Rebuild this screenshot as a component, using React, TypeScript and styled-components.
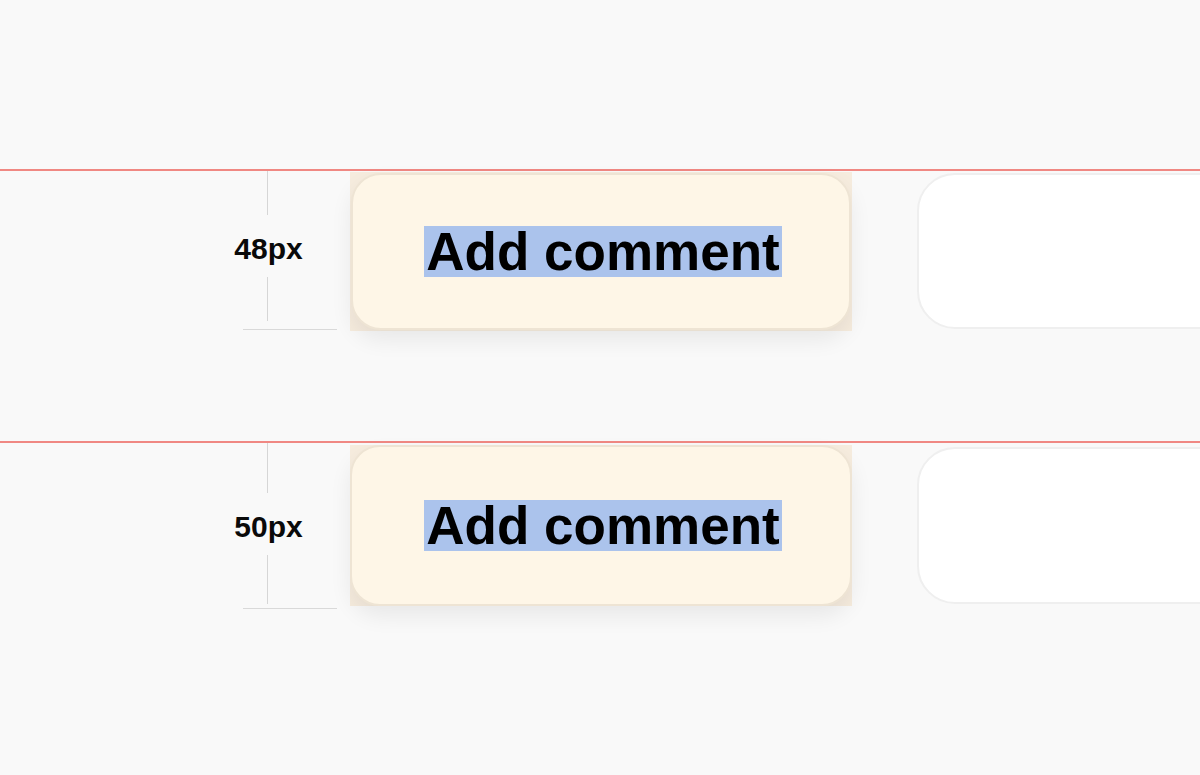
import styled, { createGlobalStyle } from "styled-components";

const GlobalStyle = createGlobalStyle`
  html, body {
    margin: 0;
    padding: 0;
    background: #f9f9f9;
    overflow: hidden;
    font-family: "Liberation Sans", Arial, sans-serif;
  }
`;

const Page = styled.div`
  width: 1200px;
  height: 775px;
  overflow: hidden;
  display: flex;
  flex-direction: column;
  padding-top: 169px;
  box-sizing: border-box;
`;

const Guide = styled.div`
  height: 2px;
  width: 100%;
  background: #f08883;
  flex-shrink: 0;
`;

const Row = styled.div<{ $h: number; $after: number }>`
  display: flex;
  height: ${(p) => p.$h}px;
  margin-bottom: ${(p) => p.$after}px;
  padding-left: 243px;
  flex-shrink: 0;
`;

const DimCol = styled.div`
  width: 94px;
  border-bottom: 1px solid #d9d9d9;
  display: flex;
  flex-shrink: 0;
`;

const DimStack = styled.div<{ $lift: number }>`
  width: 48px;
  display: flex;
  flex-direction: column;
  align-items: center;
  padding-bottom: ${(p) => p.$lift}px;
`;

const DimLine = styled.div`
  flex: 1;
  width: 1px;
  background: #d6d6d6;
`;

const DimLabel = styled.div`
  height: 62px;
  box-sizing: border-box;
  padding: 6px 0 0 3px;
  line-height: 56px;
  font-size: 30px;
  font-weight: 700;
  color: #0a0a0a;
  white-space: nowrap;
`;

const Highlight = styled.div<{ $top: number; $h: number }>`
  width: 502px;
  height: ${(p) => p.$h}px;
  margin: ${(p) => p.$top}px 0 0 13px;
  background: #f6ecde;
  display: flex;
  flex-shrink: 0;
`;

const Button = styled.div<{ $inset: number }>`
  flex: 1;
  margin: ${(p) => p.$inset}px;
  padding-left: 4px;
  border: 2px solid #eee4d4;
  border-radius: 30px;
  background: #fef6e7;
  box-shadow: 0 10px 22px rgba(0, 0, 0, 0.07);
  display: flex;
  align-items: center;
  justify-content: center;
`;

const Label = styled.span`
  display: inline-block;
  height: 51px;
  line-height: 51px;
  padding: 0 2px;
  font-size: 53px;
  font-weight: 700;
  color: #000;
  background: #abc3ec;
  white-space: nowrap;
`;

const Card = styled.div<{ $top: number; $h: number }>`
  width: 360px;
  height: ${(p) => p.$h}px;
  margin: ${(p) => p.$top}px 0 0 65px;
  box-sizing: border-box;
  border: 2px solid #efefef;
  border-radius: 38px;
  background: #fff;
  flex-shrink: 0;
`;

type Spec = {
  label: string;
  rowH: number;
  after: number;
  lift: number;
  hiTop: number;
  hiH: number;
  inset: number;
  cardTop: number;
  cardH: number;
};

const specs: Spec[] = [
  { label: "48px", rowH: 159, after: 111, lift: 8, hiTop: 1, hiH: 159, inset: 1, cardTop: 2, cardH: 156 },
  { label: "50px", rowH: 166, after: 0, lift: 4, hiTop: 2, hiH: 161, inset: 0, cardTop: 4, cardH: 157 },
];

function Sample({ s }: { s: Spec }) {
  return (
    <>
      <Guide />
      <Row $h={s.rowH} $after={s.after}>
        <DimCol>
          <DimStack $lift={s.lift}>
            <DimLine />
            <DimLabel>{s.label}</DimLabel>
            <DimLine />
          </DimStack>
        </DimCol>
        <Highlight $top={s.hiTop} $h={s.hiH}>
          <Button $inset={s.inset}>
            <Label>Add comment</Label>
          </Button>
        </Highlight>
        <Card $top={s.cardTop} $h={s.cardH} />
      </Row>
    </>
  );
}

export default function App() {
  return (
    <>
      <GlobalStyle />
      <Page>
        {specs.map((s) => (
          <Sample key={s.label} s={s} />
        ))}
      </Page>
    </>
  );
}
